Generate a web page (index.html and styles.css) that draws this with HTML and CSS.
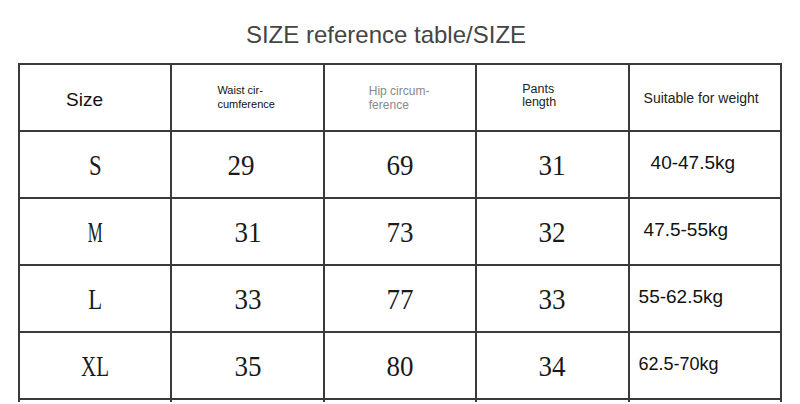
FILE: index.html
```html
<!DOCTYPE html>
<html>
<head>
<meta charset="utf-8">
<link rel="stylesheet" href="styles.css">
</head>
<body>
<h1 class="title">SIZE reference table/SIZE</h1>
<table class="size-table">
  <tr class="head">
    <td><span class="h-size">Size</span></td>
    <td><div class="h-waist">Waist cir-<br>cumference</div></td>
    <td><div class="h-hip">Hip circum-<br>ference</div></td>
    <td><div class="h-pants">Pants<br>length</div></td>
    <td><div class="h-weight">Suitable for weight</div></td>
  </tr>
  <tr>
    <td class="num"><span class="ltr">S</span></td>
    <td class="num"><span class="dig shift">29</span></td>
    <td class="num"><span class="dig">69</span></td>
    <td class="num"><span class="dig">31</span></td>
    <td class="wt w1">40-47.5kg</td>
  </tr>
  <tr>
    <td class="num"><span class="ltr m">M</span></td>
    <td class="num"><span class="dig">31</span></td>
    <td class="num"><span class="dig">73</span></td>
    <td class="num"><span class="dig">32</span></td>
    <td class="wt w2">47.5-55kg</td>
  </tr>
  <tr>
    <td class="num"><span class="ltr">L</span></td>
    <td class="num"><span class="dig">33</span></td>
    <td class="num"><span class="dig">77</span></td>
    <td class="num"><span class="dig">33</span></td>
    <td class="wt w3">55-62.5kg</td>
  </tr>
  <tr>
    <td class="num"><span class="ltr xl">XL</span></td>
    <td class="num"><span class="dig">35</span></td>
    <td class="num"><span class="dig">80</span></td>
    <td class="num"><span class="dig">34</span></td>
    <td class="wt w4 small">62.5-70kg</td>
  </tr>
  <tr class="empty">
    <td></td>
    <td></td>
    <td></td>
    <td></td>
    <td></td>
  </tr>
</table>
</body>
</html>
```
FILE: styles.css
```css
html, body {
  margin: 0;
  padding: 0;
  background: #fff;
  overflow: hidden;
}
body {
  width: 800px;
  height: 404px;
  font-family: "Liberation Sans", Arial, sans-serif;
}
.title {
  margin: 0 0 14px 0;
  padding: 21px 28px 0 0;
  font-size: 24px;
  line-height: 28px;
  font-weight: normal;
  text-align: center;
  color: #454545;
}
.size-table {
  margin-left: 18px;
  width: 764px;
  border-collapse: collapse;
  table-layout: fixed;
}
.size-table td {
  border: 2px solid #3a3a3a;
  height: 65px;
  padding: 0;
  vertical-align: middle;
}
.size-table .empty td {
  height: 2px;
  border-bottom: none;
}
.head td {
  text-align: left;
}
.h-size {
  display: block;
  padding: 4px 0 0 46px;
  font-size: 19px;
  color: #111;
}
.h-waist {
  padding: 0 0 2px 45px;
  font-size: 11px;
  line-height: 14px;
  color: #111;
}
.h-hip {
  padding: 0 0 0 44px;
  font-size: 12px;
  line-height: 14px;
  color: #888;
}
.h-pants {
  padding: 0 0 4px 45px;
  font-size: 12.5px;
  line-height: 13px;
  color: #222;
}
.h-weight {
  padding: 0 0 0 14px;
  font-size: 14px;
  color: #222;
}
.num {
  text-align: center;
  font-family: "Liberation Serif", "Times New Roman", serif;
  font-size: 30px;
  color: #1a1a1a;
}
.dig {
  display: inline-block;
  transform: scaleX(0.9);
}
.dig.shift {
  position: relative;
  left: -7px;
}
.ltr {
  display: inline-block;
  transform: scaleX(0.76);
}
.ltr.m {
  transform: scaleX(0.56);
}
.ltr.xl {
  transform: scaleX(0.7);
}
.size-table td.wt {
  font-size: 19px;
  color: #111;
  height: 62px;
  padding-bottom: 3px;
}
.size-table td.w1 { padding-left: 21px; }
.size-table td.w2 { padding-left: 14px; }
.size-table td.w3 { padding-left: 9px; }
.size-table td.w4 { padding-left: 9px; }
.size-table td.small { font-size: 18px; }
```
